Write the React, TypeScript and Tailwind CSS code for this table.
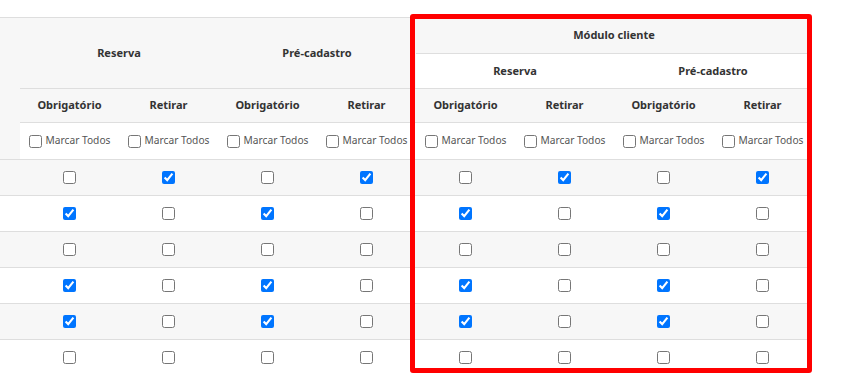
import React from "react";

// checked state for each body row, one entry per permission column
const rows: number[][] = [
  [0, 1, 0, 1, 0, 1, 0, 1],
  [1, 0, 1, 0, 1, 0, 1, 0],
  [0, 0, 0, 0, 0, 0, 0, 0],
  [1, 0, 1, 0, 1, 0, 1, 0],
  [1, 0, 1, 0, 1, 0, 1, 0],
  [0, 0, 0, 0, 0, 0, 0, 0],
];

const subHeads = ["Obrigatório", "Retirar", "Obrigatório", "Retirar", "Obrigatório", "Retirar", "Obrigatório", "Retirar"];

const head = "flex items-center justify-center border-t border-[#dedede] font-bold text-[#333]";

function Box({ checked }: { checked?: boolean }) {
  return <input type="checkbox" defaultChecked={checked} className="m-0 h-[13px] w-[13px]" />;
}

export default function App() {
  return (
    <div className="relative h-[375px] w-[844px] overflow-hidden bg-white pt-[17px] text-[11px] font-['Noto_Sans',sans-serif]">
      <div className="grid grid-cols-[20px_repeat(8,99px)] grid-rows-[36px_35px_34px_37px_repeat(6,36px)]">
        {/* header */}
        <div className="row-span-4 border-t border-[#dedede] bg-[#f7f7f7]" />
        <div className={`${head} col-span-2 row-span-2 bg-[#f7f7f7]`}>Reserva</div>
        <div className={`${head} col-span-2 row-span-2 bg-[#f7f7f7]`}>Pré-cadastro</div>
        <div className={`${head} col-span-4 bg-[#f7f7f7]`}>Módulo cliente</div>
        <div className={`${head} col-span-2 bg-white`}>Reserva</div>
        <div className={`${head} col-span-2 bg-white`}>Pré-cadastro</div>
        {subHeads.map((h, i) => (
          <div key={i} className={`${head} bg-[#f7f7f7]`}>
            {h}
          </div>
        ))}
        {subHeads.map((_, i) => (
          <label
            key={i}
            className="flex items-center justify-center gap-[4px] border-t border-[#dedede] bg-white text-[10.2px] text-[#555]"
          >
            <Box />
            <span>Marcar Todos</span>
          </label>
        ))}

        {/* body */}
        {rows.map((r, ri) => (
          <React.Fragment key={ri}>
            <div className={`border-t border-[#dedede] ${ri % 2 === 0 ? "bg-[#f7f7f7]" : "bg-white"}`} />
            {r.map((c, ci) => (
              <div
                key={ci}
                className={`flex items-center justify-center border-t border-[#dedede] ${ri % 2 === 0 ? "bg-[#f7f7f7]" : "bg-white"}`}
              >
                <Box checked={c === 1} />
              </div>
            ))}
          </React.Fragment>
        ))}
      </div>

      {/* highlight around the client module columns */}
      <div className="pointer-events-none absolute left-[410px] top-[14px] h-[359px] w-[402px] rounded-[3px] border-[5px] border-[#ff0000]" />
    </div>
  );
}
